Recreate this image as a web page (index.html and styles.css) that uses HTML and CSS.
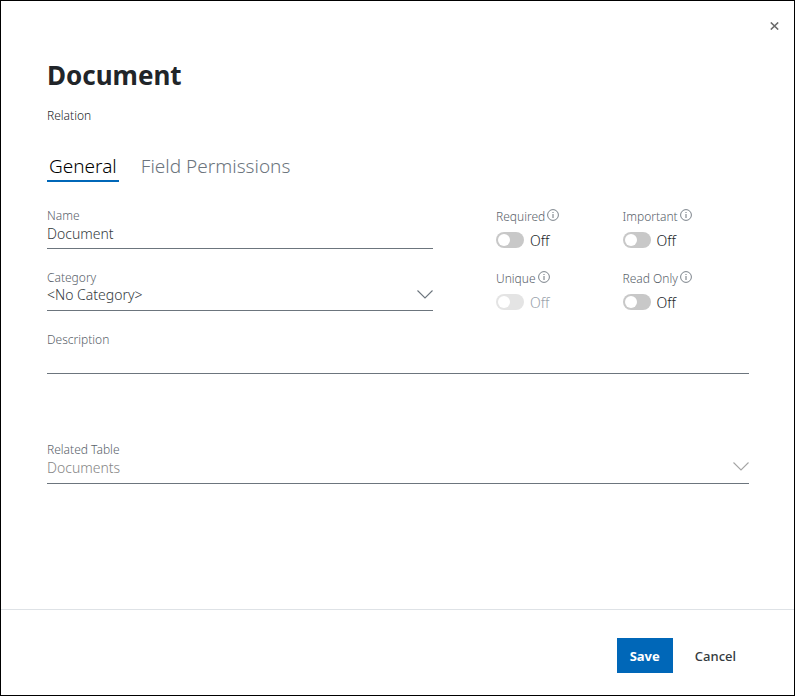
FILE: index.html
```
<!DOCTYPE html>
<html lang="en">

<head>
  <meta charset="UTF-8" />
  <meta name="viewport" content="width=device-width, initial-scale=1.0" />
  <title>Document - Relation</title>
  <link rel="stylesheet" href="styles.css">
</head>

<body>
  <svg width="0" height="0" class="symbols" aria-hidden="true">
    <symbol id="info" viewBox="0 0 12 12">
      <circle cx="6" cy="6" r="5.4" fill="none" stroke="currentColor" stroke-width="0.9" />
      <path d="M6 5v4M6 3v1" fill="none" stroke="currentColor" stroke-width="1" />
    </symbol>
    <symbol id="chevron" viewBox="0 0 16 9">
      <path d="M0.5 0.5L8 8L15.5 0.5" fill="none" stroke="currentColor" stroke-width="1.1" />
    </symbol>
  </svg>

  <div class="dialog" role="dialog" aria-labelledby="dialog-title">
    <header class="dialog-top">
      <button type="button" class="close-btn" aria-label="Close">
        <svg width="9" height="8" viewBox="0 0 9 8">
          <path d="M0.8 0.4L8.2 7.6M8.2 0.4L0.8 7.6" fill="none" stroke="currentColor" stroke-width="1.5" />
        </svg>
      </button>
    </header>

    <form id="field-form" class="dialog-body">
      <h1 id="dialog-title">Document</h1>
      <p class="subtitle">Relation</p>

      <nav class="tabs">
        <a href="#general" class="tab active">General</a>
        <a href="#permissions" class="tab">Field Permissions</a>
      </nav>

      <div class="columns">
        <div class="fields">
          <div class="field">
            <label for="name">Name</label>
            <input type="text" id="name" value="Document">
          </div>
          <div class="field">
            <label for="category">Category</label>
            <div class="select-wrap">
              <select id="category">
                <option>&lt;No Category&gt;</option>
              </select>
              <svg class="chevron"><use href="#chevron" /></svg>
            </div>
          </div>
        </div>

        <div class="toggles">
          <div class="toggle">
            <label for="required">Required <svg class="info"><use href="#info" /></svg></label>
            <div class="switch"><input type="checkbox" id="required"><span>Off</span></div>
          </div>
          <div class="toggle">
            <label for="important">Important <svg class="info"><use href="#info" /></svg></label>
            <div class="switch"><input type="checkbox" id="important"><span>Off</span></div>
          </div>
          <div class="toggle">
            <label for="unique">Unique <svg class="info"><use href="#info" /></svg></label>
            <div class="switch disabled"><input type="checkbox" id="unique" disabled><span>Off</span></div>
          </div>
          <div class="toggle">
            <label for="readonly">Read Only <svg class="info"><use href="#info" /></svg></label>
            <div class="switch"><input type="checkbox" id="readonly"><span>Off</span></div>
          </div>
        </div>
      </div>

      <div class="field wide">
        <label for="description">Description</label>
        <input type="text" id="description">
      </div>

      <div class="field wide related">
        <label for="related">Related Table</label>
        <div class="select-wrap">
          <select id="related" disabled>
            <option>Documents</option>
          </select>
          <svg class="chevron"><use href="#chevron" /></svg>
        </div>
      </div>
    </form>

    <footer class="dialog-footer">
      <button type="submit" form="field-form" class="btn primary">Save</button>
      <button type="button" class="btn">Cancel</button>
    </footer>
  </div>
</body>

</html>
```
FILE: styles.css
```
* {
  box-sizing: border-box;
}

body {
  margin: 0;
  background-color: #fff;
  color: #212529;
  font-family: "Noto Sans", "Open Sans", sans-serif;
  font-size: 14px;
  font-weight: 300;
}

input,
select,
button {
  font-family: inherit;
}

.symbols {
  position: absolute;
}

.dialog {
  display: flex;
  flex-direction: column;
  min-height: 100vh;
  border: 1px solid #000;
}

.dialog-top {
  display: flex;
  justify-content: flex-end;
  padding: 16px 10px 0;
}

.close-btn {
  display: flex;
  align-items: center;
  justify-content: center;
  width: 20px;
  height: 18px;
  padding: 0;
  border: 0;
  background: none;
  color: #6b6b6b;
}

.dialog-body {
  flex: 1;
  padding: 20px 45px 20px 46px;
}

h1 {
  margin: 0;
  font-size: 26px;
  line-height: 40px;
  font-weight: bold;
}

.subtitle {
  margin: 13px 0 0;
  font-size: 12px;
  line-height: 16px;
}

/* tabs */
.tabs {
  display: flex;
  gap: 20px;
  margin-top: 28px;
}

.tab {
  padding: 0 2px;
  border-bottom: 2px solid transparent;
  color: #6c757d;
  font-size: 19px;
  font-weight: 300;
  line-height: 28px;
  text-decoration: none;
}

.tab.active {
  border-color: #0067b8;
  color: #000;
}

/* fields */
.columns {
  display: grid;
  grid-template-columns: 1fr 253px;
  gap: 63px;
  margin-top: 26px;
}

.fields {
  display: flex;
  flex-direction: column;
  gap: 21px;
}

label {
  display: block;
  color: #59626a;
  font-size: 12px;
  line-height: 16px;
}

.field input,
.field select {
  display: block;
  width: 100%;
  height: 25px;
  padding: 0 0 6px;
  border: 0;
  border-bottom: 1px solid #6c757d;
  border-radius: 0;
  outline: 0;
  background: none;
  color: #343a40;
  font-size: 14px;
  font-weight: 300;
  line-height: 18px;
  appearance: none;
}

.wide input,
.wide select {
  height: 26px;
}

.field select:disabled {
  color: #858585;
  opacity: 1;
}

.wide {
  margin-top: 21px;
}

.related {
  margin-top: 68px;
}

.select-wrap {
  position: relative;
}

.chevron {
  position: absolute;
  top: 4px;
  right: 0;
  width: 16px;
  height: 9px;
  color: #6c757d;
  pointer-events: none;
}

select:disabled + .chevron {
  color: #a5a5a5;
}

/* switches */
.toggles {
  display: grid;
  grid-template-columns: 1fr 1fr;
  row-gap: 23px;
  align-content: start;
  padding-top: 1px;
}

.toggle label {
  display: flex;
  gap: 2px;
  margin-bottom: 7px;
}

.info {
  width: 12px;
  height: 12px;
  color: #6c757d;
}

.switch {
  display: flex;
  align-items: center;
  gap: 6px;
  height: 16px;
}

.switch input {
  width: 28px;
  height: 16px;
  margin: 0;
  padding: 2px;
  border-radius: 8px;
  background-color: #c8c8c8;
  appearance: none;
}

.switch input::before {
  content: "";
  display: block;
  width: 12px;
  height: 12px;
  border-radius: 50%;
  background-color: #fff;
}

.switch input:checked {
  padding-left: 14px;
  background-color: #0067b8;
}

.switch.disabled {
  color: #98a1aa;
}

.switch.disabled input {
  background-color: #e4e4e4;
}

/* footer */
.dialog-footer {
  display: flex;
  justify-content: flex-end;
  gap: 9px;
  padding: 28px 45px 22px;
  border-top: 1px solid #dee2e6;
}

.btn {
  height: 35px;
  padding: 0 13px;
  border: 0;
  background: none;
  color: #343a40;
  font-size: 13px;
  font-weight: 500;
}

.btn.primary {
  background-color: #0067b8;
  color: #fff;
  font-weight: bold;
}
```
